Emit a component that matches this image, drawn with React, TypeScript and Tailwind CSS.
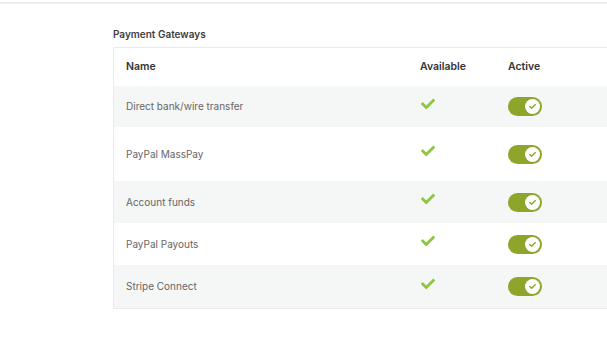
import { FaCheck } from "react-icons/fa";

const gateways = [
  { name: "Direct bank/wire transfer", h: "h-[41px]", grey: true },
  { name: "PayPal MassPay", h: "h-[54px]", grey: false },
  { name: "Account funds", h: "h-[42px]", grey: true },
  { name: "PayPal Payouts", h: "h-[42px]", grey: false },
  { name: "Stripe Connect", h: "h-[43px]", grey: true },
];

function Toggle() {
  return (
    <div className="w-[34px] h-[19px] rounded-full bg-[#8ca52a] flex items-center justify-end pr-[2px]">
      <div className="w-[15px] h-[15px] rounded-full bg-white flex items-center justify-center">
        <FaCheck className="text-[#8ca52a] text-[7px]" />
      </div>
    </div>
  );
}

export default function App() {
  return (
    <div
      className="w-[607px] h-[355px] overflow-hidden bg-white relative"
      style={{ fontFamily: "Inter, 'Noto Sans', sans-serif" }}
    >
      {/* top bar shadow */}
      <div className="h-[2px] bg-white" />
      <div className="h-[2px] bg-[#ededed]" />

      <div className="pl-[113px] pt-[25px]">
        <h2 className="text-[10px] font-semibold text-[#3d3d3d] leading-none mb-[8px]">
          Payment Gateways
        </h2>

        <div className="w-[520px] border border-[#e9eaea]">
          {/* header */}
          <div className="grid grid-cols-[294px_88px_1fr] h-[38px] items-center text-[10.5px] font-semibold text-[#333]">
            <div className="pl-[12px]">Name</div>
            <div className="pl-[12px]">Available</div>
            <div className="pl-[12px]">Active</div>
          </div>

          {gateways.map((g) => (
            <div
              key={g.name}
              className={`grid grid-cols-[294px_88px_1fr] items-center ${g.h} ${
                g.grey ? "bg-[#f5f6f6]" : "bg-white"
              }`}
            >
              <div className="pl-[12px] text-[10px] text-[#666]">{g.name}</div>
              <div className="pl-[13px] pb-[6px]">
                <FaCheck className="text-[#8dc63f] text-[14px]" />
              </div>
              <div className="pl-[12px]">
                <Toggle />
              </div>
            </div>
          ))}
        </div>
      </div>
    </div>
  );
}
